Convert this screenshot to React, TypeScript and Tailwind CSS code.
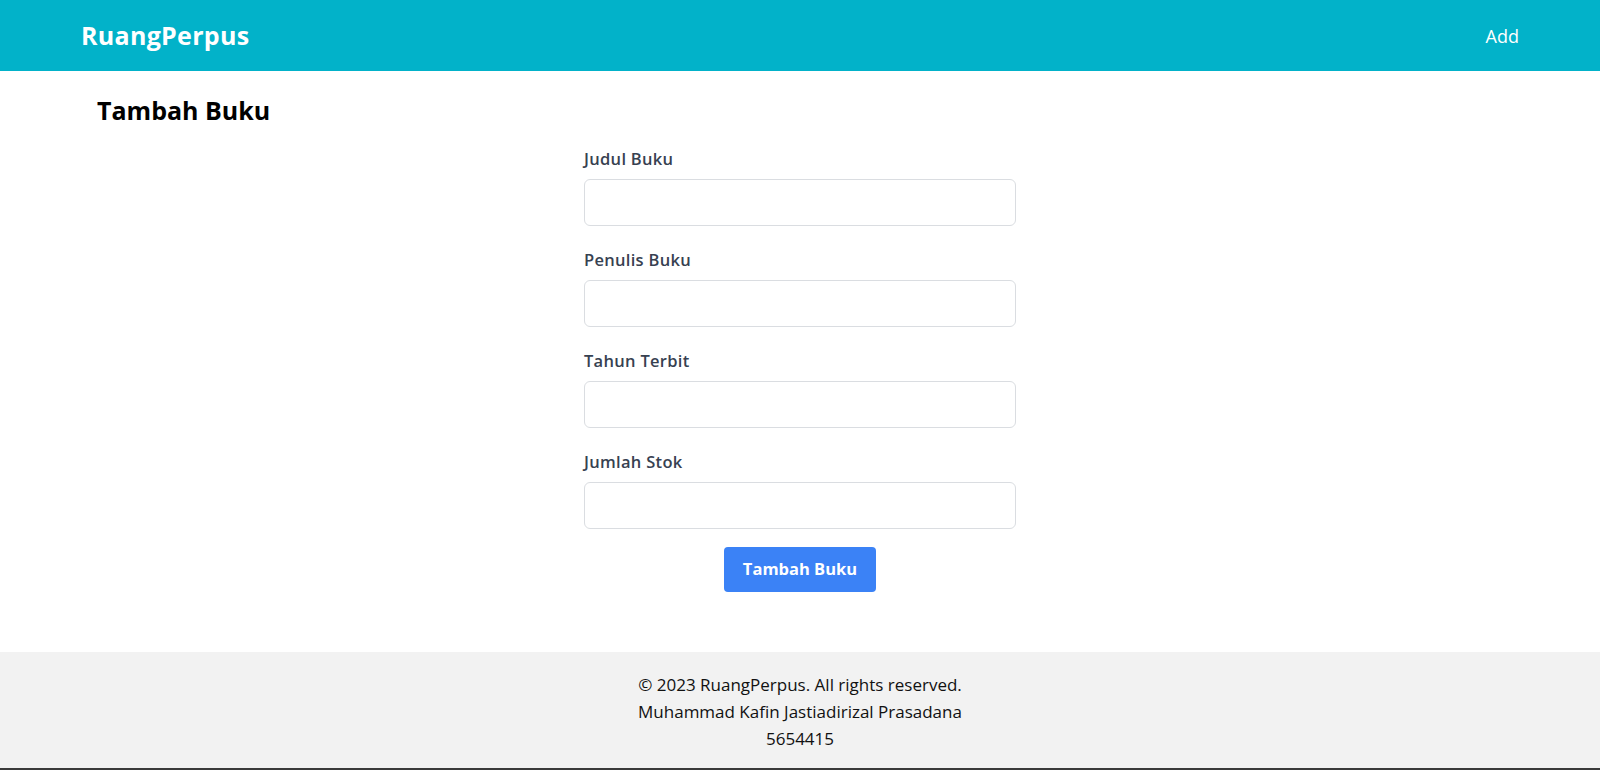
export default function App() {
  const fields = ["Judul Buku", "Penulis Buku", "Tahun Terbit", "Jumlah Stok"];

  return (
    <div className="flex flex-col h-[770px] bg-white font-['Open_Sans',sans-serif] overflow-hidden">
      {/* navbar */}
      <header className="flex h-[71px] shrink-0 items-center justify-between bg-[#02b2c9] pl-[81px] pr-[81px] text-white">
        <span className="text-[25px] font-bold tracking-[0.3px]">RuangPerpus</span>
        <span className="text-lg">Add</span>
      </header>

      {/* content */}
      <main className="h-[581px] shrink-0 px-[97px] pt-[23px]">
        <h1 className="text-[25px] font-bold leading-8 text-black">Tambah Buku</h1>
        <form className="mx-auto mt-[21px] w-[432px]" onSubmit={(e) => e.preventDefault()}>
          <div className="flex flex-col gap-[22px]">
            {fields.map((label) => (
              <div key={label}>
                <label className="mb-[8px] block text-[16.5px] font-semibold leading-6 tracking-[0.3px] text-[#374151]">
                  {label}
                </label>
                <input
                  type="text"
                  className="block h-[47px] w-full rounded-md border border-[#dadde1] bg-white px-3"
                />
              </div>
            ))}
          </div>
          <div className="mt-[18px] flex justify-center">
            <button
              type="submit"
              className="h-[45px] w-[152px] rounded bg-[#3b82f6] text-[16.5px] font-bold text-white"
            >
              Tambah Buku
            </button>
          </div>
        </form>
      </main>

      {/* footer */}
      <footer className="h-[116px] shrink-0 bg-[#f2f2f2] pt-[19px] text-center text-[17px] leading-[27px] text-[#111]">
        <p>© 2023 RuangPerpus. All rights reserved.</p>
        <p>Muhammad Kafin Jastiadirizal Prasadana</p>
        <p>5654415</p>
      </footer>
      <div className="h-[2px] shrink-0 bg-[#3a3a3a]" />
    </div>
  );
}
